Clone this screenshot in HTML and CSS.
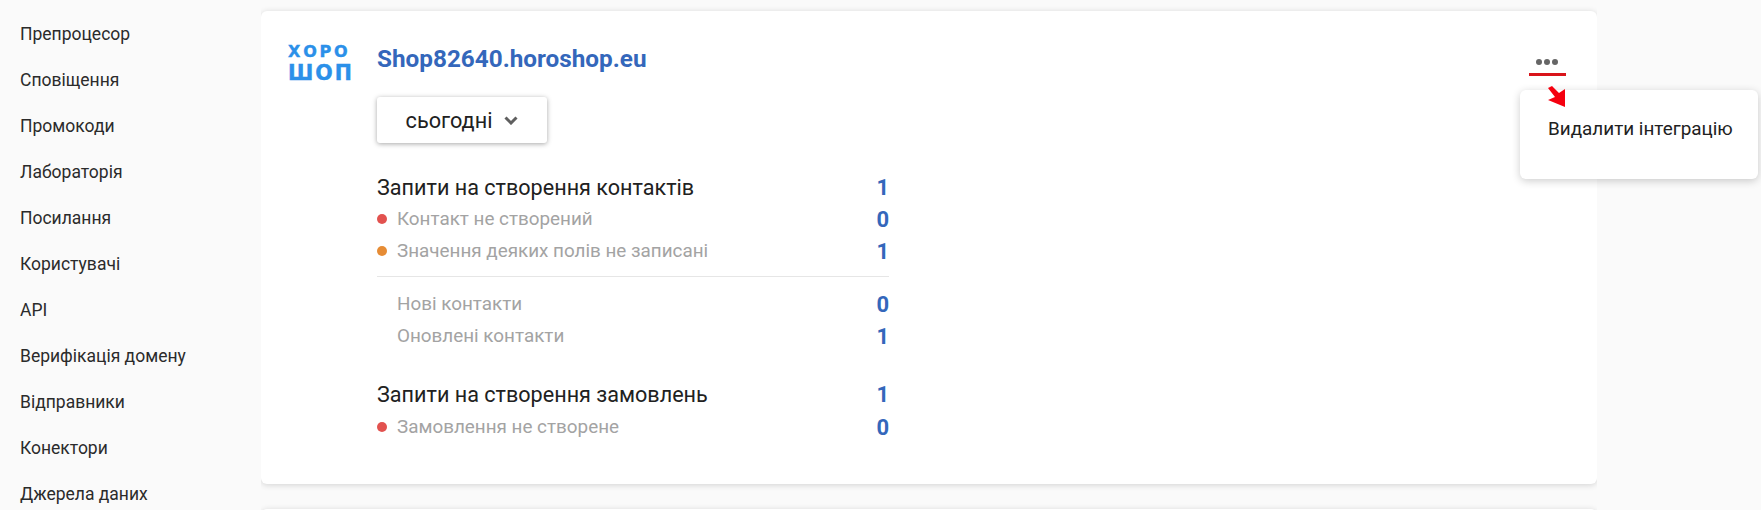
FILE: index.html
```html
<!DOCTYPE html>
<html lang="uk">
<head>
  <meta charset="UTF-8">
  <title>Інтеграції</title>
  <link rel="stylesheet" href="styles.css">
</head>
<body>

  <nav class="sidebar">
    <a href="#">Препроцесор</a>
    <a href="#">Сповіщення</a>
    <a href="#">Промокоди</a>
    <a href="#">Лабораторія</a>
    <a href="#">Посилання</a>
    <a href="#">Користувачі</a>
    <a href="#">API</a>
    <a href="#">Верифікація домену</a>
    <a href="#">Відправники</a>
    <a href="#">Конектори</a>
    <a href="#">Джерела даних</a>
  </nav>

  <main class="content">
    <section class="card">
      <div class="logo">
        <span class="logo-top">ХОРО</span>
        <span class="logo-bottom">ШОП</span>
      </div>

      <div class="details">
        <a class="shop-name" href="#">Shop82640.horoshop.eu</a>

        <button class="period">
          сьогодні
          <svg width="14" height="9" viewBox="0 0 14 9"><path d="M1.5 1.5L7 7l5.5-5.5" fill="none" stroke="#5f5f5f" stroke-width="3"/></svg>
        </button>

        <div class="stats">
          <div class="row head"><span>Запити на створення контактів</span><b>1</b></div>
          <div class="row"><span><i class="dot red"></i>Контакт не створений</span><b>0</b></div>
          <div class="row"><span><i class="dot orange"></i>Значення деяких полів не записані</span><b>1</b></div>
          <hr>
          <div class="row"><span class="plain">Нові контакти</span><b>0</b></div>
          <div class="row"><span class="plain">Оновлені контакти</span><b>1</b></div>
          <div class="row head second"><span>Запити на створення замовлень</span><b>1</b></div>
          <div class="row"><span><i class="dot red"></i>Замовлення не створене</span><b>0</b></div>
        </div>
      </div>

      <div class="more">
        <i></i><i></i><i></i>
      </div>
    </section>

    <section class="card next"></section>
  </main>

  <div class="underline"></div>
  <svg class="arrow" width="20" height="24" viewBox="0 0 20 24">
    <path d="M1 3L5 1 12 8 18 4 18 22 1 15 8 12Z" fill="#f5000f"/>
  </svg>

  <div class="menu">Видалити інтеграцію</div>

</body>
</html>
```

FILE: styles.css
```css
* {
  box-sizing: border-box;
}

body {
  margin: 0;
  height: 510px;
  overflow: hidden;
  display: flex;
  font-family: Roboto, sans-serif;
  background: #fafafa;
  color: #212121;
}

.sidebar {
  width: 261px;
  height: 510px;
  flex-shrink: 0;
  overflow: hidden;
  padding: 23px 0 0 20px;
}

.sidebar a {
  display: block;
  height: 46px;
  line-height: 22px;
  font-size: 17.5px;
  color: #2b2b2b;
  text-decoration: none;
}

.content {
  width: 1336px;
  height: 510px;
  overflow: hidden;
  padding: 11px 0 0;
}

.card {
  height: 473px;
  padding: 32px 0 0 27px;
  display: flex;
  background: #fff;
  border-radius: 6px;
  box-shadow: 0 1px 6px rgba(0,0,0,0.16);
}

.card.next {
  height: 100px;
  margin-top: 25px;
  padding: 0;
}

.logo {
  width: 89px;
  color: #2b90e9;
  font-family: "DejaVu Sans", sans-serif;
  font-weight: 700;
}

.logo span {
  display: block;
  white-space: nowrap;
  -webkit-text-stroke: 0.4px #2b90e9;
}

.logo-top {
  height: 20px;
  line-height: 18px;
  font-size: 16px;
  letter-spacing: 2.8px;
}

.logo-bottom {
  height: 20px;
  line-height: 20px;
  font-size: 20.5px;
  letter-spacing: 2px;
}

.details {
  width: 512px;
  flex-shrink: 0;
}

.shop-name {
  display: block;
  height: 32px;
  line-height: 32px;
  font-size: 24.3px;
  font-weight: 700;
  color: #3467bb;
  text-decoration: none;
}

.period {
  display: flex;
  align-items: center;
  justify-content: center;
  gap: 12px;
  width: 170px;
  height: 46px;
  margin-top: 22px;
  border: none;
  border-radius: 3px;
  background: #fff;
  font-family: Roboto, sans-serif;
  font-size: 21.7px;
  color: #212121;
  box-shadow: 0 1px 5px rgba(0,0,0,0.35);
}

.stats {
  margin-top: 28px;
}

.row {
  display: flex;
  justify-content: space-between;
  align-items: center;
  height: 32px;
  font-size: 18.85px;
  color: #a3a3a3;
}

.row b {
  font-size: 22px;
  font-weight: 700;
  color: #3467bb;
}

.row.head {
  font-size: 21.6px;
  color: #212121;
}

.row.second {
  margin-top: 26px;
}

.row.second + .row {
  margin-top: 1px;
}

.row span {
  display: flex;
  align-items: center;
}

.row .plain {
  padding-left: 20px;
}

.dot {
  width: 10px;
  height: 10px;
  margin-right: 10px;
  border-radius: 50%;
}

.red {
  background: #e2524f;
}

.orange {
  background: #e68c35;
}

hr {
  margin: 9px 0 11px;
  border: none;
  border-top: 1px solid #e6e6e6;
}

.more {
  display: flex;
  gap: 2px;
  height: 6px;
  margin: 16px 39px 0 auto;
}

.more i {
  width: 6px;
  height: 6px;
  border-radius: 50%;
  background: #666;
}

.underline {
  position: absolute;
  left: 1529px;
  top: 73px;
  width: 37px;
  height: 3px;
  background: #d9141a;
}

.arrow {
  position: absolute;
  left: 1547px;
  top: 85px;
  z-index: 2;
}

.menu {
  position: absolute;
  left: 1520px;
  top: 90px;
  width: 238px;
  height: 89px;
  padding: 27px 0 0 28px;
  background: #fff;
  border-radius: 6px;
  font-size: 18.9px;
  line-height: 24px;
  color: #212121;
  box-shadow: 0 2px 8px rgba(0,0,0,0.2);
}
```
